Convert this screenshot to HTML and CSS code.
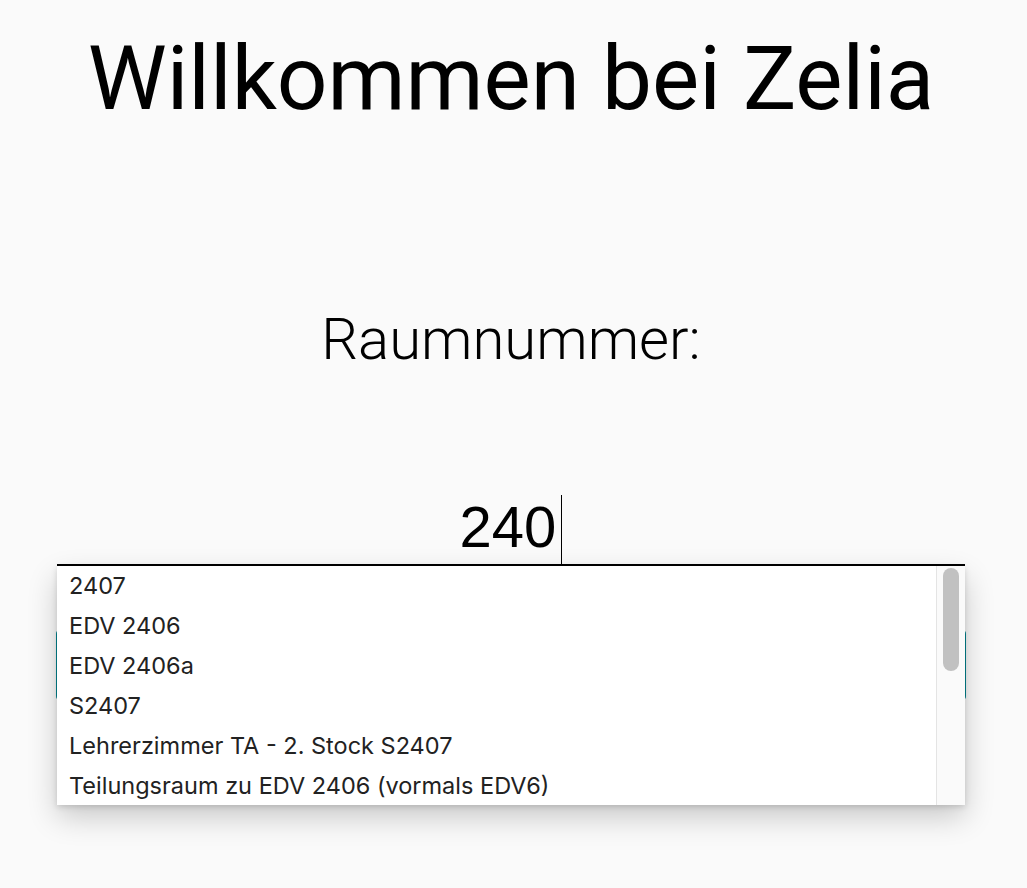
FILE: index.html
```html
<!DOCTYPE html>
<html lang="de">
<head>
<meta charset="utf-8">
<title>Zelia</title>
<link rel="stylesheet" href="styles.css">
</head>
<body>
<main class="page">
  <h1 class="title">Willkommen bei Zelia</h1>
  <div class="label">Raumnummer:</div>
  <div class="form">
    <div class="field">
      <span class="value">240</span><span class="caret"></span>
    </div>
    <div class="dropdown">
      <ul class="options">
        <li>2407</li>
        <li>EDV 2406</li>
        <li>EDV 2406a</li>
        <li>S2407</li>
        <li>Lehrerzimmer TA - 2. Stock S2407</li>
        <li>Teilungsraum zu EDV 2406 (vormals EDV6)</li>
      </ul>
      <div class="scrollbar"><div class="thumb"></div></div>
    </div>
    <button class="submit" type="button"></button>
  </div>
</main>
</body>
</html>
```

FILE: styles.css
```css
html, body {
  margin: 0;
  padding: 0;
  background: #fafafa;
  min-height: 100%;
}
html {
  height: 100%;
}
body {
  min-height: 888px;
}
.page {
  display: flex;
  flex-direction: column;
  align-items: center;
  padding-top: 33px;
  padding-right: 5px;
}
.title {
  margin: 0;
  font-family: Roboto, "Liberation Sans", sans-serif;
  font-weight: 400;
  font-size: 89px;
  line-height: 91px;
  color: #000;
}
.label {
  margin-top: 186px;
  font-family: Roboto, "Liberation Sans", sans-serif;
  font-weight: 300;
  font-size: 58px;
  line-height: 59px;
  color: #000;
}
.form {
  position: relative;
  width: 908px;
  margin-top: 122px;
}
.field {
  display: flex;
  justify-content: center;
  align-items: flex-end;
  height: 73px;
  border-bottom: 2px solid #000;
  font-family: "Liberation Sans", Arial, sans-serif;
  font-size: 58px;
  line-height: 66px;
  color: #000;
}
.value {
  padding-bottom: 4px;
}
.caret {
  width: 1px;
  height: 69px;
  background: #000;
  margin-left: 5px;
}
.dropdown {
  position: absolute;
  left: 0;
  right: 0;
  top: 75px;
  height: 239px;
  display: flex;
  background: #fff;
  box-shadow: 0 12px 28px rgba(0, 0, 0, 0.2), 0 2px 6px rgba(0, 0, 0, 0.14);
  z-index: 2;
}
.options {
  flex: 1;
  list-style: none;
  margin: 0;
  padding: 0;
}
.options li {
  height: 40px;
  line-height: 40px;
  padding-left: 12px;
  font-family: Inter, "Noto Sans", sans-serif;
  font-size: 23.5px;
  color: #222;
  white-space: nowrap;
}
.scrollbar {
  width: 28px;
  background: #fafafa;
  border-left: 1px solid #e4e4e4;
  padding-top: 2px;
  display: flex;
  justify-content: center;
}
.thumb {
  width: 16px;
  height: 103px;
  border-radius: 8px;
  background: #c1c1c1;
}
.submit {
  display: block;
  width: calc(100% + 2px);
  height: 70px;
  margin: 64px -1px 0;
  border: 0;
  border-radius: 4px;
  background: #00838f;
}
```
